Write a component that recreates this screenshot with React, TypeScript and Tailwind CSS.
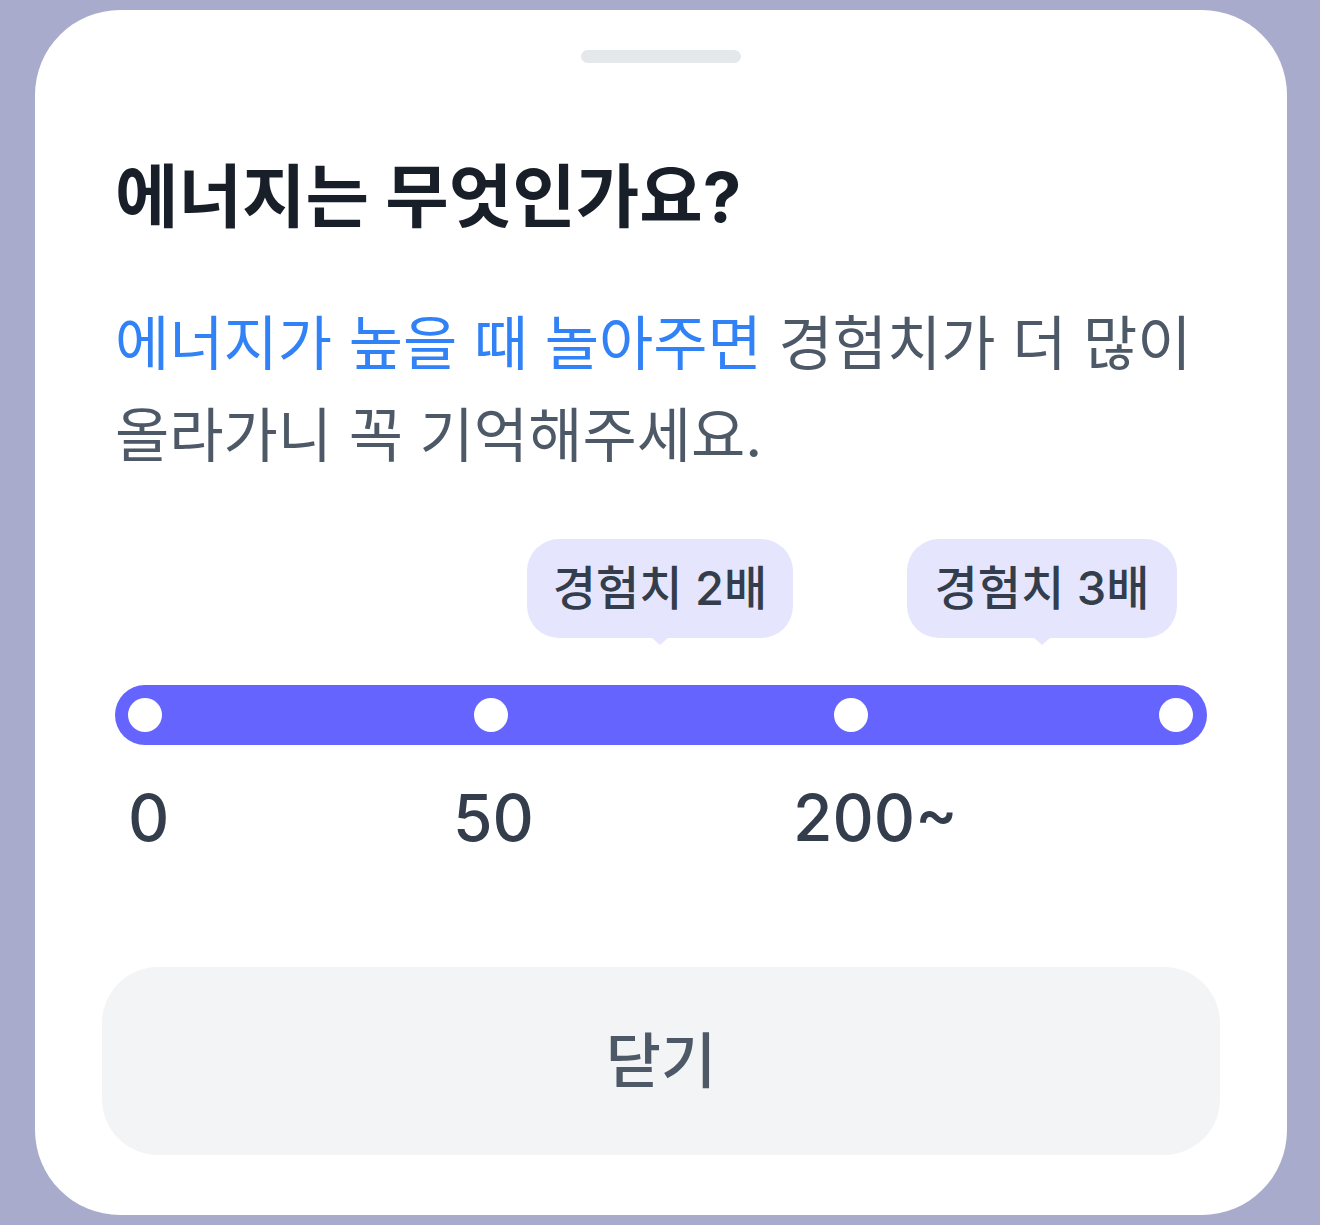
const FONT = "font-['Inter','Noto_Sans_CJK_KR',sans-serif]"

const dots = [13, 359, 719, 1044]

const labels = [
  { text: '0', left: 13 },
  { text: '50', left: 338 },
  { text: '200~', left: 678 },
]

const tips = [
  { text: '경험치 2배', left: 412, width: 266 },
  { text: '경험치 3배', left: 792, width: 270 },
]

function Tip({ text, left, width }: { text: string; left: number; width: number }) {
  return (
    <div className="absolute top-0 flex flex-col items-center" style={{ left, width }}>
      <div className="w-full h-[99px] rounded-[32px] bg-[#e5e6fe] flex items-center justify-center text-[47px] font-medium text-[#333d4b]">
        {text}
      </div>
      <div className="w-0 h-0 border-x-[8px] border-x-transparent border-t-[7px] border-t-[#e5e6fe]" />
    </div>
  )
}

export default function App() {
  return (
    <div className={`w-[1320px] h-[1225px] bg-[#a9abcc] pt-[10px] pl-[35px] pr-[33px] ${FONT}`}>
      <div className="h-[1205px] bg-white rounded-[85px] flex flex-col">
        <div className="mx-auto mt-[40px] w-[160px] h-[13px] rounded-full bg-[#e5e8eb]" />

        <h1 className="mt-[92px] px-[80px] text-[69px] leading-[84px] font-bold text-[#191f28]">
          에너지는 무엇인가요?
        </h1>

        <p className="mt-[59px] px-[80px] text-[59px] leading-[92px] text-[#4e5968]">
          <span className="text-[#3182f6]">에너지가 높을 때 놀아주면</span> 경험치가 더 많이
          <br />
          올라가니 꼭 기억해주세요.
        </p>

        <div className="relative mx-[80px] mt-[57px] h-[146px]">
          {tips.map((t) => (
            <Tip key={t.text} {...t} />
          ))}
        </div>

        <div className="relative mx-[80px] h-[60px] rounded-full bg-[#6664ff]">
          {dots.map((d) => (
            <div
              key={d}
              className="absolute top-[13px] w-[34px] h-[34px] rounded-full bg-white"
              style={{ left: d }}
            />
          ))}
        </div>

        <div className="relative mx-[80px] mt-[38px] h-[70px]">
          {labels.map((l) => (
            <span
              key={l.text}
              className="absolute top-0 text-[64px] leading-[70px] font-medium text-[#333d4b]"
              style={{ left: l.left }}
            >
              {l.text}
            </span>
          ))}
        </div>

        <div className="flex-1" />

        <button className="mx-[67px] mb-[60px] h-[188px] rounded-[56px] bg-[#f2f4f6] text-[60px] font-medium text-[#4e5968]">
          닫기
        </button>
      </div>
    </div>
  )
}
